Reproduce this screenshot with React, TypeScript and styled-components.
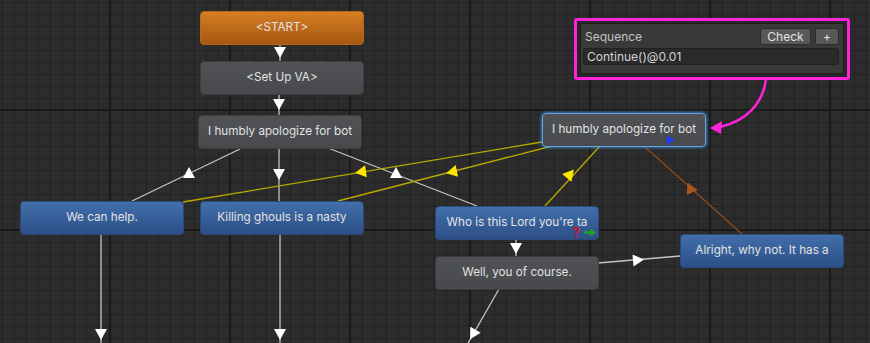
import React from 'react';
import styled, { createGlobalStyle, css } from 'styled-components';

const GlobalStyle = createGlobalStyle`
  body {
    margin: 0;
    background: #2b2b2b;
    font-family: Inter, "Noto Sans", sans-serif;
  }
`;

type Variant = 'start' | 'gray' | 'blue';

const variants = {
  start: css`
    background: linear-gradient(#d77d23, #a45811);
    border-color: #b9661a;
  `,
  gray: css`
    background: linear-gradient(#505256, #47494c);
    border-color: #3c3e41;
  `,
  blue: css`
    background: linear-gradient(#416faa, #2d4f88);
    border-color: #2b4a7c;
  `,
};

const Styled = {
  Canvas: styled.div`
    position: relative;
    width: 870px;
    height: 343px;
    overflow: hidden;
    background-color: #2c2c2c;
    background-image:
      linear-gradient(to right, #1a1a1a 2px, transparent 2px),
      linear-gradient(to bottom, #1a1a1a 2px, transparent 2px),
      linear-gradient(to right, #222222 1px, transparent 1px),
      linear-gradient(to bottom, #222222 1px, transparent 1px);
    background-size: 120px 120px, 120px 120px, 12px 12px, 12px 12px;
    background-position: 109px 109px, 109px 109px, 2px 2px, 2px 2px;
  `,

  Links: styled.svg`
    position: absolute;
    inset: 0;
  `,

  Node: styled.div<{ $variant: Variant; $selected?: boolean }>`
    position: absolute;
    box-sizing: border-box;
    width: 164px;
    height: 34px;
    display: flex;
    align-items: center;
    justify-content: center;
    padding-bottom: 2px;
    border: 1px solid;
    border-radius: 4px;
    color: #e2e2e2;
    font-size: 11.7px;
    line-height: 14px;
    white-space: nowrap;
    ${({ $variant }) => variants[$variant]}
    ${({ $selected }) =>
      $selected &&
      css`
        border-color: #5ea6e6;
        box-shadow: 0 0 3px 1px rgba(70, 150, 230, 0.7);
      `}
  `,

  Badges: styled.div`
    position: absolute;
    right: 2px;
    bottom: 1px;
    display: flex;
    align-items: flex-end;
    gap: 4px;
  `,

  Question: styled.span`
    color: #d4142c;
    font-weight: 700;
    font-size: 14px;
    line-height: 11px;
  `,

  Popup: styled.div`
    position: absolute;
    left: 574px;
    top: 18px;
    width: 276px;
    height: 62px;
    box-sizing: border-box;
    border: 3px solid #ff24dc;
    border-radius: 3px;
    background: #262626;
    padding: 2px 3px;
  `,

  Panel: styled.div`
    box-sizing: border-box;
    height: 51px;
    display: flex;
    flex-direction: column;
    gap: 3px;
    background: #393939;
    border: 1px solid #1e1e1e;
    border-radius: 3px;
    padding: 4px 4px 0 2px;
  `,

  Row: styled.div`
    display: flex;
    align-items: center;
    gap: 4px;
    height: 17px;
  `,

  Label: styled.span`
    flex: 1;
    padding-left: 2px;
    color: #c2c2c2;
    font-size: 12px;
  `,

  Button: styled.button<{ $wide?: boolean }>`
    box-sizing: border-box;
    height: 17px;
    width: ${({ $wide }) => ($wide ? '51px' : '24px')};
    padding: 0;
    border: 1px solid #2a2a2a;
    border-radius: 3px;
    background: #585858;
    color: #e4e4e4;
    font-family: Inter, sans-serif;
    font-size: 12px;
    line-height: 15px;
  `,

  Field: styled.div`
    box-sizing: border-box;
    height: 17px;
    display: flex;
    align-items: center;
    padding-left: 3px;
    background: #2a2a2a;
    border: 1px solid #212121;
    border-radius: 3px;
    color: #d4d4d4;
    font-size: 12px;
  `,
};

type NodeData = { id: string; x: number; y: number; text: string; variant: Variant; selected?: boolean };

const nodes: NodeData[] = [
  { id: 'start', x: 200, y: 11, text: '<START>', variant: 'start' },
  { id: 'va', x: 200, y: 61, text: '<Set Up VA>', variant: 'gray' },
  { id: 'sorry1', x: 198, y: 115, text: 'I humbly apologize for bot', variant: 'gray' },
  { id: 'sorry2', x: 542, y: 113, text: 'I humbly apologize for bot', variant: 'gray', selected: true },
  { id: 'help', x: 20, y: 201, text: 'We can help.', variant: 'blue' },
  { id: 'ghouls', x: 200, y: 201, text: 'Killing ghouls is a nasty', variant: 'blue' },
  { id: 'lord', x: 435, y: 206, text: "Who is this Lord you're ta", variant: 'blue' },
  { id: 'well', x: 435, y: 256, text: 'Well, you of course.', variant: 'gray' },
  { id: 'alright', x: 680, y: 234, text: 'Alright, why not. It has a', variant: 'blue' },
];

type Link = { x1: number; y1: number; x2: number; y2: number; ax: number; ay: number; angle: number; color: string; head: string };

const WHITE = { line: '#c4c4c4', head: '#ffffff' };
const YELLOW = { line: '#bba800', head: '#ffe600' };
const BROWN = { line: '#8c4a1e', head: '#a8561c' };

const link = (
  x1: number, y1: number, x2: number, y2: number,
  ax: number, ay: number, angle: number, c: { line: string; head: string },
): Link => ({ x1, y1, x2, y2, ax, ay, angle, color: c.line, head: c.head });

const links: Link[] = [
  link(280, 44, 280, 61, 280, 52, 90, WHITE),
  link(279, 94, 279, 115, 279, 104, 90, WHITE),
  link(240, 149, 132, 201, 189, 173, -90, WHITE),
  link(328, 148, 477, 206, 396, 173, -90, WHITE),
  link(279, 148, 279, 201, 279, 174, 90, WHITE),
  link(542, 142, 183, 202, 361, 172, 172, YELLOW),
  link(552, 146, 338, 201, 452, 172, 168, YELLOW),
  link(600, 146, 545, 206, 570, 174, -50, YELLOW),
  link(645, 147, 742, 234, 690, 188, -115, BROWN),
  link(516, 239, 516, 256, 516, 248, 90, WHITE),
  link(598, 263, 680, 256, 638, 260, -5, WHITE),
  link(499, 289, 467, 345, 473, 334, 120, WHITE),
  link(101, 234, 101, 345, 101, 334, 90, WHITE),
  link(280, 234, 280, 345, 280, 334, 90, WHITE),
];

function arrowPoints(cx: number, cy: number, angle: number) {
  const r = (angle * Math.PI) / 180;
  const dx = Math.cos(r);
  const dy = Math.sin(r);
  const pt = (a: number, b: number) => `${cx + dx * a - dy * b},${cy + dy * a + dx * b}`;
  return [pt(6, 0), pt(-5, 6), pt(-5, -6)].join(' ');
}

function FlagIcon() {
  return (
    <svg width="8" height="9" viewBox="0 0 8 9" style={{ position: 'absolute', left: 124, top: 22 }}>
      <rect x="0" y="0" width="2" height="9" fill="#1e3cff" />
      <polygon points="2,1 8,4 2,7" fill="#1e3cff" />
    </svg>
  );
}

function GreenArrow() {
  return (
    <svg width="12" height="9" viewBox="0 0 12 9" style={{ marginBottom: 1 }}>
      <path d="M0 3.2 H6.5 V0.5 L12 4.5 L6.5 8.5 V5.8 H0 Z" fill="#1da524" />
    </svg>
  );
}

export default function App() {
  return (
    <>
      <GlobalStyle />
      <Styled.Canvas>
        <Styled.Links width="870" height="343">
          {links.map((l, i) => (
            <g key={i}>
              <line x1={l.x1} y1={l.y1} x2={l.x2} y2={l.y2} stroke={l.color} strokeWidth="1.3" />
              <polygon points={arrowPoints(l.ax, l.ay, l.angle)} fill={l.head} />
            </g>
          ))}
          <path d="M766 79 C 763 104, 746 121, 720 127" fill="none" stroke="#ff24dc" strokeWidth="2.5" />
          <polygon points="710,128 722,121 721,134" fill="#ff24dc" />
        </Styled.Links>

        {nodes.map((n) => (
          <Styled.Node key={n.id} $variant={n.variant} $selected={n.selected} style={{ left: n.x, top: n.y }}>
            {n.text}
            {n.id === 'sorry2' && <FlagIcon />}
            {n.id === 'lord' && (
              <Styled.Badges>
                <Styled.Question>?</Styled.Question>
                <GreenArrow />
              </Styled.Badges>
            )}
          </Styled.Node>
        ))}

        <Styled.Popup>
          <Styled.Panel>
            <Styled.Row>
              <Styled.Label>Sequence</Styled.Label>
              <Styled.Button $wide>Check</Styled.Button>
              <Styled.Button>+</Styled.Button>
            </Styled.Row>
            <Styled.Field>Continue()@0.01</Styled.Field>
          </Styled.Panel>
        </Styled.Popup>
      </Styled.Canvas>
    </>
  );
}
